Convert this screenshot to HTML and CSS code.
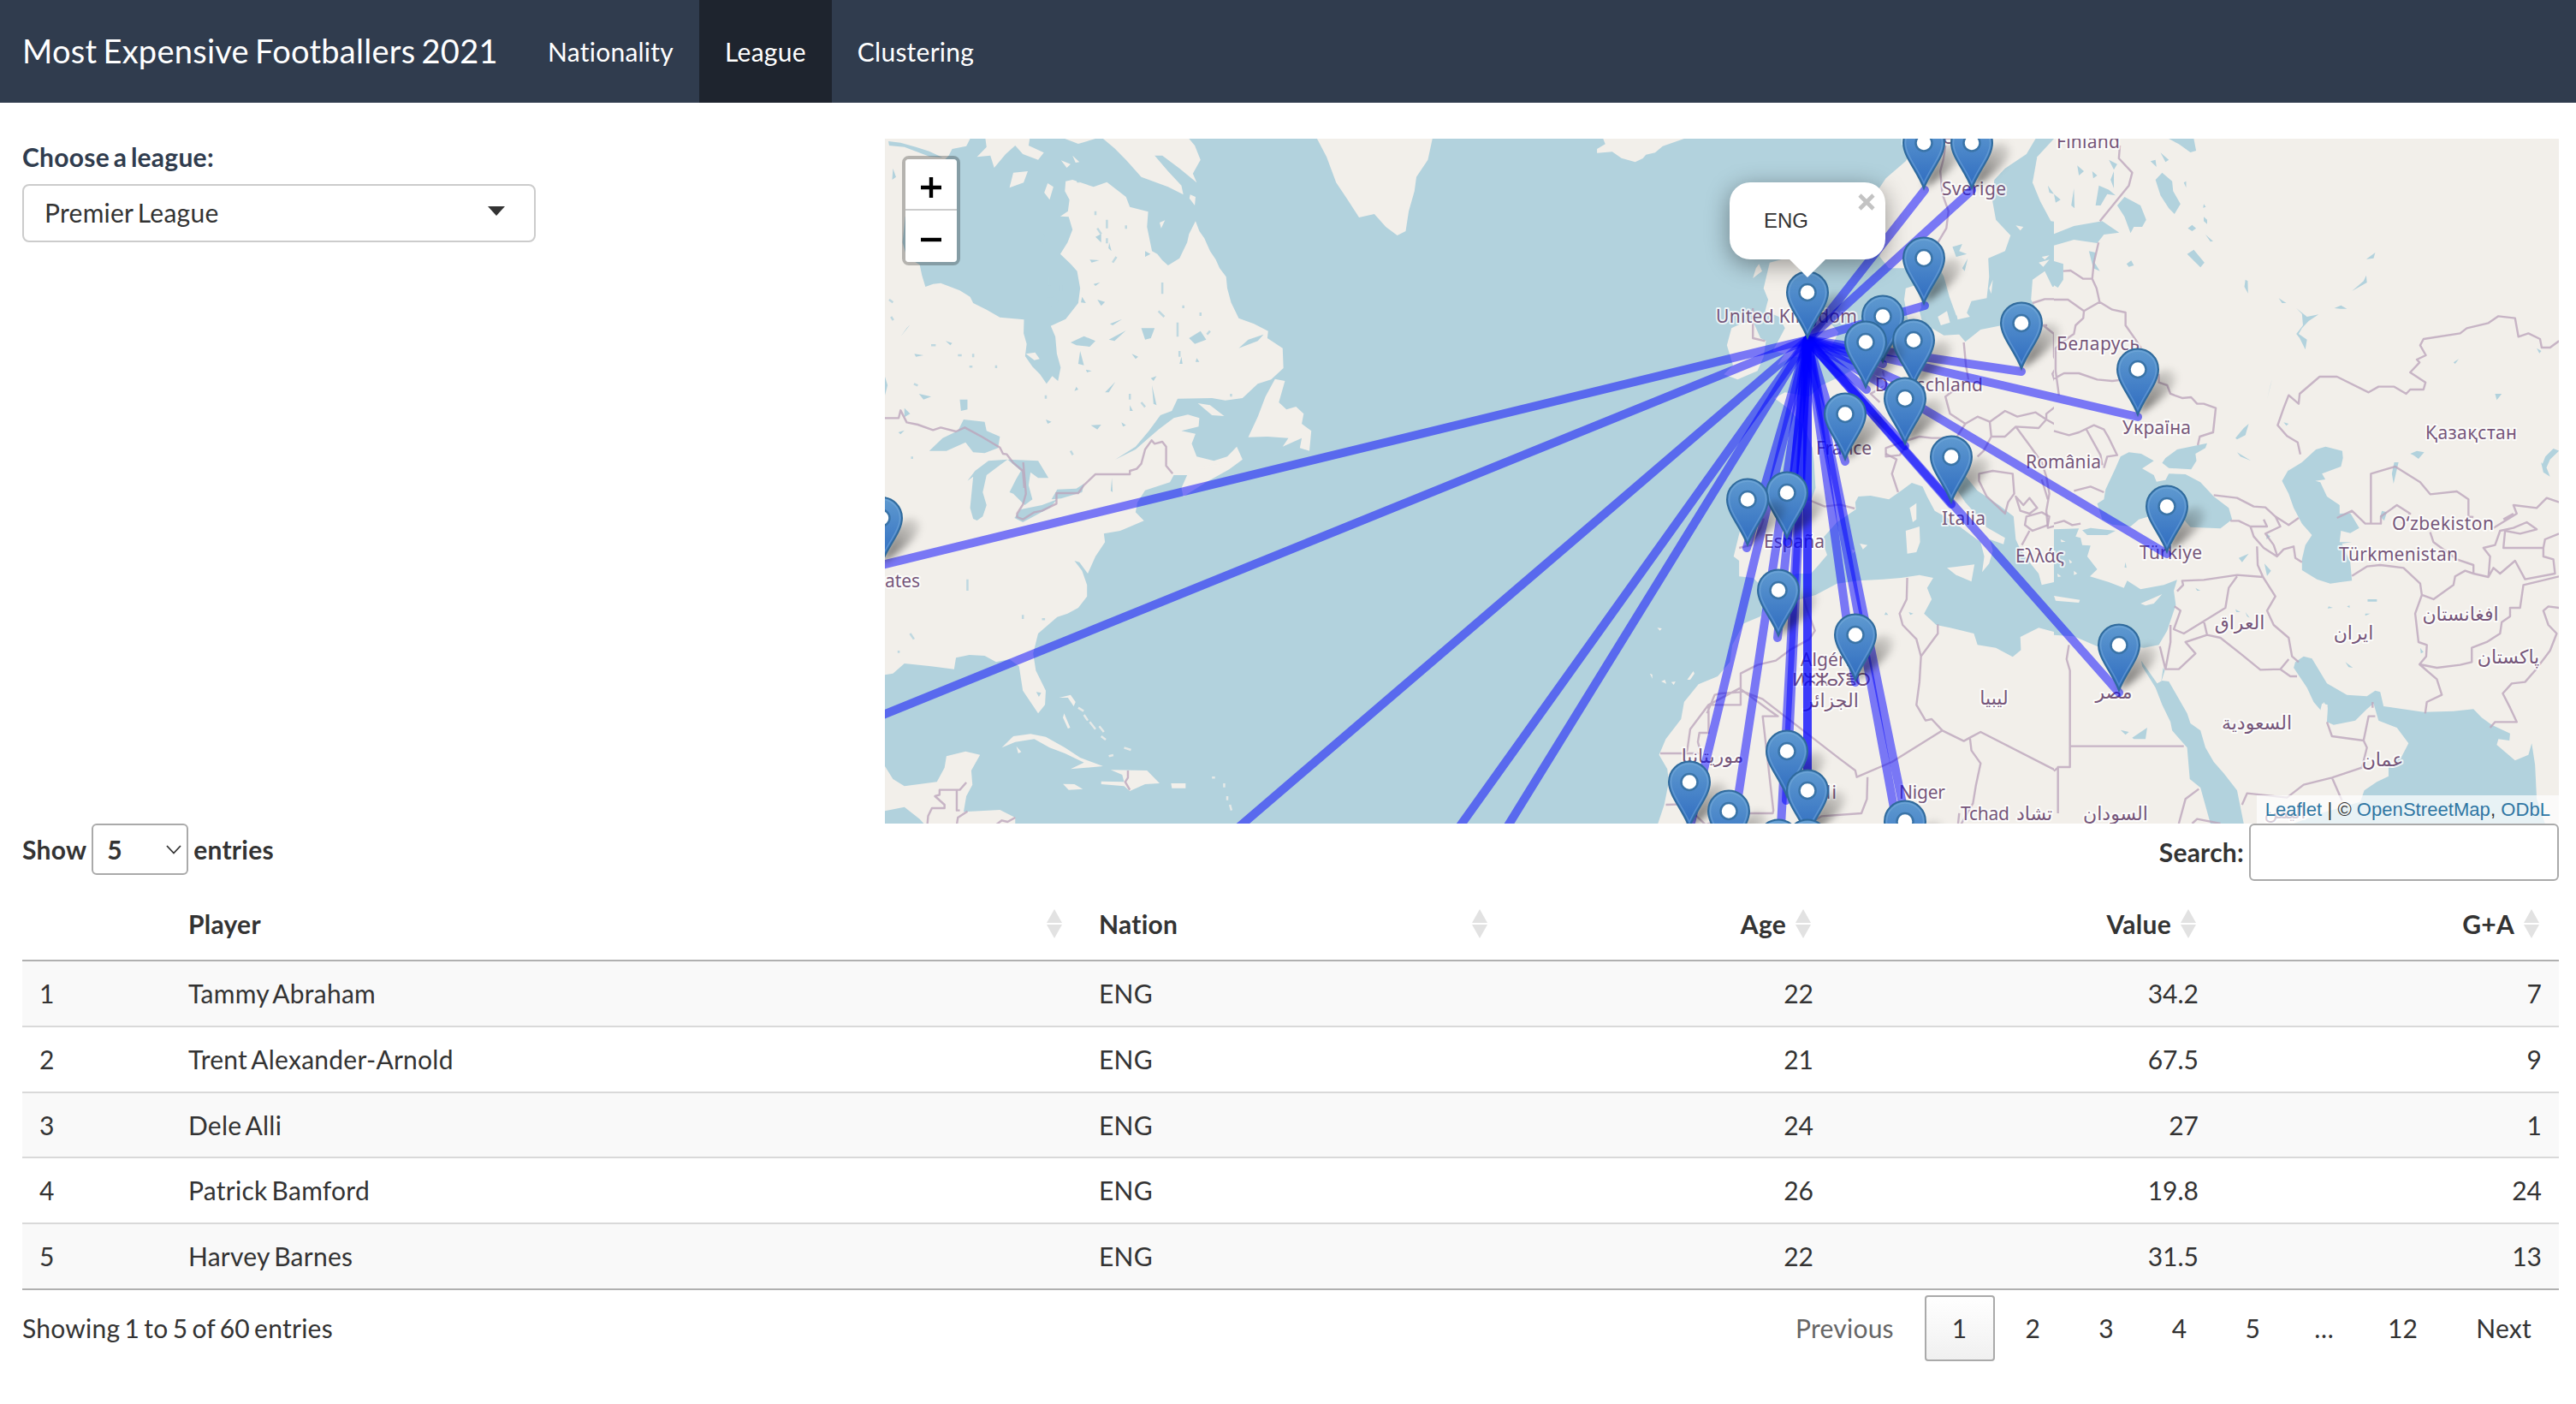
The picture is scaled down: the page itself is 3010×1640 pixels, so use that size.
FILE: index.html
```html
<!DOCTYPE html>
<html lang="en">
<head>
<meta charset="utf-8">
<title>Most Expensive Footballers 2021</title>
<link rel="stylesheet" href="styles.css">
</head>
<body>
<nav class="navbar">
  <span class="brand">Most Expensive Footballers 2021</span>
  <a class="tab">Nationality</a>
  <a class="tab active">League</a>
  <a class="tab">Clustering</a>
</nav>
<main class="page">
  <section class="top">
    <div class="sidebar">
      <label class="label">Choose a league:</label>
      <div class="select"><span>Premier League</span>
        <svg class="caret" width="20" height="11" viewBox="0 0 20 11"><path d="M0 0H20L10 11Z" fill="#333"/></svg>
      </div>
    </div>
    <div class="map">
      <svg class="canvas" width="1956" height="800" viewBox="1034 162 1956 800">
        <defs>
          <linearGradient id="pinFill" x1="0" y1="0" x2="0" y2="1"><stop offset="0" stop-color="#5f9ad0"/><stop offset="1" stop-color="#2e6bc0"/></linearGradient>
          <linearGradient id="shade" x1="0" y1="1" x2="1" y2="0"><stop offset="0" stop-color="#000" stop-opacity=".6"/><stop offset="1" stop-color="#000" stop-opacity=".05"/></linearGradient>
          <filter id="blur" x="-50%" y="-50%" width="200%" height="200%"><feGaussianBlur stdDeviation="4"/></filter>
          <g id="pin">
            <path d="M0 53C6 36 18 -2 36 0C54 4 46 26 0 53Z" fill="url(#shade)" filter="url(#blur)"/>
            <path d="M0 53C-8 32 -24 16 -24 0A24 24 0 0 1 24 0C24 16 8 32 0 53Z" fill="url(#pinFill)" stroke="#2f6a9c" stroke-width="2"/>
            <path d="M0 47C-7 30 -21.500 14 -21.500 0A21.500 21.500 0 0 1 21.500 0C21.500 14 7 30 0 47Z" fill="none" stroke="#7fb2de" stroke-opacity=".45" stroke-width="1.500"/>
            <circle r="9.500" fill="#fff" stroke="#3a74a8" stroke-width="2.500"/>
          </g>
        </defs>

        <!-- North America and Greenland -->
        <g transform="translate(1030 150) scale(.44643 .33333)">
          <g class="land">
            <path d="M9 36L232 36L222 62L185 72L176 95L100 200L62 310L55 400L66 450L100 478L106 515L115 555L135 545L155 542L205 568L232 590L240 612L275 635L310 662L373 670L372 718L380 755L376 798L395 835L415 862L432 895L447 868L462 885L469 838L459 790L455 730L443 692L482 668L515 612L520 560L512 500L495 475L468 440L487 400L500 355L490 310L468 308L488 290L492 250L480 220L482 185L500 180L555 205L590 188L640 240L650 275L698 292L695 345L708 430L722 440L735 462L750 480L780 455L800 400L805 370L822 325L832 360L845 385L860 430L875 460L885 490L902 520L905 560L915 610L935 665L975 685L1012 710L1010 735L1050 770L1052 840L1020 880L985 895L945 945L900 953L865 945L775 947L760 990L730 1005L700 1060L665 1115L612 1160L665 1125L725 1055L765 1015L802 1003L832 1015L830 1045L785 1060L822 1070L812 1105L825 1150L870 1165L905 1150L930 1115L945 1160L910 1195L850 1240L790 1290L785 1260L800 1215L765 1215L755 1240L690 1268L670 1310L665 1345L687 1375L625 1410L582 1420L585 1450L560 1500L540 1560L518 1520L505 1515L525 1550L538 1600L538 1640L515 1680L487 1700L460 1712L410 1770L397 1840L404 1900L430 1970L428 2020L410 2050L370 1970L360 1885L335 1860L300 1870L270 1848L230 1845L195 1855L190 1895L130 1885L60 1875L30 1910L9 1915Z"/>
            <path d="M9 2235L30 2280L60 2305L145 2290L165 2240L170 2200L220 2183L258 2195L235 2250L238 2300L222 2340L215 2395L310 2388L350 2415L350 2450L120 2450L100 2420L60 2378L9 2392Z"/>
            <path d="M580 36L610 70L640 110L680 170L750 205L790 232L785 200L750 150L715 95L735 95L780 140L825 190L815 158L835 110L820 60L805 36Z"/>
            <path d="M272 36L275 65L250 100L285 95L295 138L325 90L350 60L370 90L410 110L425 85L385 60L388 36Z"/>
            <path d="M480 36H560L515 54ZM345 155L383 150L372 190L335 208ZM435 192L450 205L440 250L426 225ZM470 112L495 125L485 138ZM500 95L518 118L508 120ZM728 330L742 322L732 350ZM378 790L402 785L414 808L400 812ZM808 232L822 240L820 270L806 245Z"/>
            <path d="M1140 36L1165 100L1190 190L1220 250L1250 312L1290 300L1320 345L1350 375L1372 360L1380 290L1395 220L1400 170L1430 110L1442 36Z"/>
            <path d="M1030 878L1056 885L1040 960L1060 985L1085 975L1105 1000L1100 1035L1125 1060L1120 1130L1095 1120L1100 1085L1050 1115L1065 1085L1010 1080L960 1082L985 1010L1005 940Z"/>
            <path d="M828 963L860 970L897 1008L865 1005Z"/>
            <path d="M315 2170L345 2130L390 2122L430 2132L480 2170L520 2205L580 2235L495 2245L530 2222L480 2190L440 2170L400 2140L350 2150Z"/>
            <path d="M600 2248L695 2250L728 2295L690 2298L650 2322L635 2305L575 2298L575 2288L635 2290L630 2265ZM475 2297L505 2298L527 2315L490 2318ZM758 2295H796V2312H760ZM478 2050L494 2100L488 2103L475 2065ZM353 2165L366 2185L358 2190ZM465 1995L495 1985L508 2010L503 2025L488 1995Z"/>
          </g>
          <g class="water">
            <path d="M125 1130L160 1085L200 1060L215 1020L270 1028L275 1060L310 1080L305 1120L270 1138L240 1135L220 1100L170 1130Z"/>
            <path d="M240 1368L232 1330L240 1220L225 1235L245 1200L280 1165L330 1160L310 1180L275 1215L265 1275L275 1320L265 1360L250 1374Z"/>
            <path d="M330 1160L410 1165L437 1225L410 1225L390 1205L385 1250L395 1300L375 1320L345 1280L335 1275L352 1230L365 1200Z"/>
            <path d="M348 1365L365 1335L420 1320L460 1300L440 1330L370 1380ZM445 1300L460 1265L510 1262L530 1245L525 1275L470 1297Z"/>
            <path d="M18 45L50 50L90 65L125 80L160 102L125 98L60 65L20 60ZM205 950L225 950L225 985L208 990ZM9 870L16 900L9 935ZM495 750L530 728L560 745L545 765L510 760ZM680 700L715 700L705 735L690 740ZM805 735L835 710L850 740L820 755ZM935 770L960 740L1000 722L985 745ZM585 925L612 888L595 925ZM595 740L640 708L610 745ZM565 600L585 608L575 622ZM520 780L530 830L515 825ZM75 688L50 730L66 700ZM98 930L130 940L110 950ZM510 180L520 190L512 190ZM430 595L450 590L465 605L445 625ZM598 685L630 668L605 690ZM560 380L575 370V400ZM705 875L720 868L712 885ZM708 900L720 970L712 965ZM650 970L658 990L650 990ZM548 1040L575 1038L565 1055ZM430 1020L445 1028L435 1035ZM628 1030L640 1040L632 1045ZM168 745L185 752L180 760ZM545 460L570 462L550 470ZM555 545L572 540L560 552ZM655 790L672 800L665 808ZM785 800L788 825H780ZM825 805L832 818H822ZM60 980L75 1000L60 1012ZM44 1065L60 1058L50 1072ZM30 140L38 170L28 180ZM510 905L515 915L505 920ZM86 790L110 795L90 800ZM690 430L704 440L690 450ZM525 590L535 612L522 610ZM596 400L602 430L594 420ZM405 1975L418 1978L412 1992ZM603 1225L605 1275L600 1270ZM535 845L550 850L538 855Z"/>
          </g>
          <g class="speck"><path d="M560 290v14M590 320v30M565 350l10 20M590 385v18M640 340v12M615 450l-10 20M735 540v40M775 680v50M780 780v20M725 640l15 20M790 620v10M835 645v12M860 710l-8 12M200 795h10M240 790v12M300 830v10M85 895l10 6M130 760h12M20 600l10 10M25 660l6 12M650 930v20M680 960l10 16M230 835h8M430 935v12M80 1150v8M495 1130l6 14M225 1580v40M370 1705v14M420 1720h8M75 1770l10 20M45 1830v8M440 520v30M470 550v20M425 370l-8 40M915 930v10"/>
          <path class="isles" d="M515 2030l14 12M530 2055l10 20M545 2080l15 25M570 2095l12 20M575 2130l12 12M635 2170l18 8M595 2200l12-4M865 2275h8M897 2295v14M905 2340v14M912 2370l4 20M830 1190l60-10"/></g>
          <path class="border" d="M9 1015H45L50 988L66 1030L95 1038L135 1057L155 1048L195 1062L218 1048L262 1080L310 1118L318 1140L328 1142L345 1172L370 1200L374 1260M371 1170L378 1280L370 1318L355 1350V1362L370 1370L400 1345L420 1340L458 1315V1278H515L530 1250L560 1212H650V1200L668 1193L680 1175L690 1125L707 1093L715 1105L735 1098L745 1115V1182L762 1210"/>
          <path class="border" d="M120 2440L122 2410L132 2382H165V2370L140 2340L152 2335L152 2318H205L222 2292M197 2318V2390H205M197 2440L200 2415L225 2393M300 2440L315 2425L330 2430L350 2415M645 2250L645 2275L638 2290L650 2318"/>
        </g>

        <!-- Europe and Africa -->
        <g transform="translate(1900 150) scale(.35714 .33333)">
          <g class="land">
            <path d="M-75 36L-68 55L-95 72L-95 86L-45 82L-15 104L30 118L55 105L65 92L95 85L120 62L190 36Z"/>
            <path d="M345 700L375 685L415 675L440 735L458 745L450 800L430 850L365 880L320 862L350 830L330 760Z"/>
            <path d="M470 470L540 450L560 480L600 560L640 630L668 680L695 715L670 770L640 785L600 800L540 800L495 830L520 790L480 780L500 740L520 700L500 660L455 640L465 600L450 560ZM435 475L445 500L415 525L425 490Z"/>
            <path d="M1340 36L1310 90L1240 140L1205 180L1198 250L1210 320L1258 375L1240 430L1185 455L1188 520L1180 595L1130 605L1110 660L1080 655L1058 590L1040 520L1000 440L960 430L910 490L860 490L830 450L835 300L828 210L850 175L915 115L960 36Z"/>
            <path d="M915 560L950 548L1000 560L960 640L972 690L1000 700L1040 725L1090 722L1110 748L1160 705L1230 690L1330 668L1345 640L1325 600L1330 530L1370 500L1395 555L1430 550L1432 490L1450 470L1410 440L1405 405L1480 390L1568 380L1568 1600L1400 1590L1360 1600L1350 1560L1320 1520L1290 1475L1275 1440L1268 1360L1220 1320L1150 1270L1108 1215L1085 1190L1060 1215L1085 1270L1110 1310L1160 1370L1180 1398L1240 1435L1235 1457L1190 1440L1200 1480L1188 1525L1165 1555L1172 1500L1160 1450L1110 1410L1060 1370L1010 1340L985 1290L970 1255L935 1242L900 1270L860 1300L800 1287L760 1290L750 1310L752 1335L690 1380L640 1440L658 1495L630 1530L605 1560L560 1560L500 1580L470 1610L440 1600L415 1575L370 1570L370 1515L352 1500L375 1400L362 1320L385 1290L540 1300L605 1305L620 1260L615 1170L610 1120L580 1040L530 980L485 945L520 925L600 940L640 900L700 870L770 830L800 780L820 735L850 720L915 715L925 690L910 600Z"/>
            <path d="M1568 310L1450 335L1390 325L1355 255L1330 190L1345 100L1400 36L1568 36Z"/>
            <path d="M440 1710L385 1735L348 1810L340 1870L300 1920L237 1948L190 2010L180 2070L130 2140L108 2195L135 2245L140 2290L125 2370L100 2450H1568V1810L1500 1805L1420 1770L1350 1750L1290 1782L1292 1828L1265 1852L1210 1820L1150 1810L1138 1770L1060 1750L1015 1740L975 1700L1000 1650L985 1610L1005 1575L960 1565L900 1575L840 1580L760 1585L690 1595L620 1635L570 1650L525 1670L500 1650L470 1640Z"/>
            <path d="M915 1410L960 1395L962 1450L950 1485L920 1490ZM928 1330L950 1313V1370L938 1380ZM1050 1540L1140 1528L1130 1588L1080 1565ZM765 1455L790 1460L775 1475ZM738 1475L750 1480L742 1490ZM1405 1640L1490 1652L1488 1660L1410 1655Z"/>
            <path d="M1080 645L1110 640L1125 660L1085 670ZM1020 660L1050 640L1060 680L1030 690ZM1188 560L1200 530L1195 580ZM1275 340L1300 345L1290 358ZM1350 470L1385 460L1365 485ZM1360 450L1385 445L1370 460Z"/>
            <path d="M78 1910l8 4v14zM115 1938l12-6 5 14zM148 1940l14-2-6 12zM200 1932l20-30 4 8-14 22zM102 1750l15 2-6 8z"/>
          </g>
          <path class="water" d="M1068 415L1100 405L1090 430L1115 440L1080 450ZM1100 490L1118 455L1108 500ZM1400 150L1415 120V200ZM1440 80L1448 130L1438 110ZM1460 130L1480 150L1455 180ZM1500 80L1520 120L1505 140ZM1530 100L1545 160L1530 150ZM1420 220L1445 240L1430 250ZM1380 200L1400 230L1385 225ZM1515 200L1545 210L1530 250ZM970 590L985 600L975 660L965 620ZM925 1695L940 1700L930 1705ZM850 1695L858 1705L845 1705Z"/>
          <g class="border">
            <path d="M1045 60L1038 110L1028 150L1035 230L1055 290L1048 350L1020 400L1015 450M1430 505L1460 498L1500 528H1525L1545 450L1530 400M1525 528L1540 600L1500 630L1430 598H1370L1330 612M1500 630L1502 660L1480 690L1400 720L1365 690L1378 690M1400 720V800L1412 830L1395 860L1415 925L1410 970L1375 1000V1020M1415 875L1450 858L1568 880M1105 750L1112 830L1120 880L1045 940L1060 1000L1110 1035L1150 1010L1190 1028L1240 990L1280 1010L1340 995L1375 1020M1190 1028L1195 1080L1170 1130L1150 1150M1110 1035L1080 1085L1000 1085L960 1080L900 1100L850 1120V1150L895 1145L920 1110M1195 1080L1240 1080L1275 1045L1350 1050L1375 1020L1450 1065L1500 1050L1540 1110L1545 1170M1275 1045L1320 1110L1360 1170L1375 1220L1385 1280L1375 1340L1380 1400L1430 1385L1480 1400L1500 1370L1510 1300"/>
            <path d="M890 1275L870 1210L885 1160L850 1140M830 960L800 930L850 900L840 850M605 1305L650 1325L700 1318L748 1332M1155 1210L1200 1200L1265 1210L1270 1280L1250 1310L1240 1350L1180 1290L1155 1235ZM1275 1290L1300 1320L1320 1295L1345 1330L1320 1350L1290 1340ZM1310 1360L1360 1345L1385 1360L1380 1390L1330 1410L1305 1390ZM1320 1410L1295 1460M1380 1300L1360 1230M1420 1260L1480 1250L1568 1260M415 630V735L455 745M370 1470L410 1460L440 1400L450 1370L370 1370"/>
            <path d="M920 1575L918 1650L895 1700L905 1740L950 1790L965 1850L1020 1770V1738M965 1850L960 1940L950 2020L980 2075L1000 2070L1035 2110L1105 2147L1125 2135L1160 2115L1410 2252V2238H1450V1980L1440 1860L1445 1810M1450 2165H1568M1410 2252V2400M1125 2135L1130 2180L1160 2225L1145 2300L1135 2365L1090 2450M1035 2110L870 2220L755 2273L750 2250L700 2210L447 2000L375 1970V1910L430 1880L490 1865L540 1825L600 1790L618 1760L590 1680L580 1640M375 1960L270 2020H375V1960M375 1965L470 2040L497 2060H447L482 2390L480 2400H370L260 2440M270 2020V2118H240L235 2150L245 2190L112 2190M270 2020L210 2105L200 2180L185 2195M375 1975L310 1980L290 1985L265 2050M130 2370L190 2368L260 2440M790 2273L788 2350L770 2400L640 2410L580 2450M1085 2450L1090 2400"/>
          </g>
        </g>

        <!-- Asia -->
        <g transform="translate(2400 150) scale(.38903 .33333)">
          <path class="land" d="M0 36H1517V2436H0Z"/>
          <g class="water">
            <path d="M0 370L60 342L145 325L196 365L150 372L130 402L60 390L0 410ZM0 465L28 475L28 530L12 558L0 550ZM105 430L125 435L122 470L138 500L118 490ZM190 270L212 240L260 270L277 320L265 345L240 345L230 367L212 310ZM305 180L325 155L355 185L358 220L380 265L362 300L345 280L320 235ZM345 36H420L427 78L410 84L375 55ZM400 440L420 425L452 470L440 487ZM402 350L415 338L427 350L415 360ZM218 475L232 463L240 480L225 485ZM320 85L345 110L335 118ZM290 115L305 110L308 135ZM390 190L397 185V208ZM450 265L456 275L448 278ZM450 310L460 320V335L450 325ZM455 372L478 395L470 397ZM165 110L190 125L180 145ZM135 200L165 215L185 235L160 230L140 270L125 270ZM180 150V210L170 180ZM60 210L62 280L52 270ZM70 130L90 150L75 165ZM115 150L130 165L118 175ZM0 230L20 250L5 260ZM575 530L582 535L583 578L572 555ZM675 595L698 612L685 612ZM728 630L760 660L795 652L765 675L745 700L735 720L760 740L755 775L738 735L728 720L748 690L745 650ZM720 840L735 800L722 835ZM842 630L862 620L880 632L860 632ZM938 458L965 435L960 455ZM895 570L930 535L938 515L940 540ZM545 1085L570 1050L585 1035L575 1075L550 1090ZM550 1135L592 1165L560 1150ZM655 880L640 950L650 900ZM690 1030L705 1035L698 1042ZM1070 1140L1090 1130L1112 1135L1095 1158L1080 1145ZM1325 930L1345 930L1330 952ZM1200 820L1216 808L1205 825ZM1450 770L1464 780L1458 788Z"/>
            <path d="M185 1190L155 1265L150 1300L130 1315L145 1370L175 1388L230 1395L255 1370L290 1358L340 1358L390 1370L410 1397L500 1402L535 1370L525 1330L480 1290L440 1240L395 1212L345 1210L335 1232L308 1238L300 1215L265 1192L300 1165L262 1140L225 1135L200 1150Z"/>
            <path d="M325 1172L335 1155L370 1125L460 1103L455 1120L425 1140L428 1165L412 1195L345 1190ZM85 1408L110 1400L185 1410L160 1425L100 1425Z"/>
            <path d="M703 1200L745 1170L787 1125L816 1115L866 1130L868 1155L862 1185L805 1210L815 1230L785 1235L800 1240L820 1290L858 1320L858 1350L890 1348L917 1400L890 1418L862 1410L858 1450L895 1450L865 1455L890 1520L895 1585L860 1590L830 1595L790 1580L745 1548L745 1510L755 1460L775 1425L745 1385L720 1330L705 1280L685 1235L710 1185Z"/>
            <path d="M0 1405L75 1402L65 1430L80 1435L85 1460L110 1462L100 1500L130 1545L108 1570L165 1590L210 1610L220 1585L260 1615L330 1600L370 1582L360 1620L366 1670L340 1760L315 1810L270 1820L200 1810L130 1815L60 1780L0 1775Z"/>
            <path d="M725 1870L750 1850L775 1858L820 1945L880 1985L940 1990L965 1970L980 1975L990 2025L1110 2045L1200 2042L1260 2035L1285 2065L1315 2090L1370 2120L1368 2145L1335 2140L1330 2160L1385 2215L1425 2195L1435 2155L1445 2230L1450 2350L1475 2436H720L800 2400L920 2360L932 2320L970 2290L1005 2270L1005 2240L1045 2200L1065 2155L1030 2100L975 2075L960 2015L940 2035L905 2075L840 2090L820 2080L822 2030L810 2010L802 2040L780 2010L760 1960L720 1890Z"/>
            <path d="M262 1865L310 1945L325 1935L345 1938L400 2050L410 2085L440 2110L455 2170L480 2220L510 2260L550 2320L570 2436H470L440 2310L408 2280L400 2170L355 2110L350 2080L325 2020L305 1960L265 1885ZM328 1890L322 1940L333 1900Z"/>
            <path d="M1466 1180L1476 1150L1500 1122L1517 1130L1490 1160L1475 1200ZM1463 1170L1480 1190L1490 1220L1470 1205ZM1022 1170H1035L1020 1245L1015 1210ZM985 1340L1000 1345L992 1375L980 1360ZM555 1505L585 1490L565 1520ZM632 1525L652 1550L640 1568ZM545 1685L560 1695L548 1695ZM575 1695L588 1715L580 1710ZM825 1675L838 1680L822 1682ZM942 1650H970V1658H942ZM935 1700L950 1700L935 1708ZM880 1675L888 1672V1680ZM875 1870L898 1890L885 1888ZM200 2108L225 2115L215 2125ZM235 2135L280 2100L275 2140L240 2140ZM640 1420L650 1430L638 1440ZM215 1520L218 1540L212 1538ZM425 1610L440 1620L430 1620ZM1100 1820L1110 1835L1102 1840Z"/>
          </g>
          <g class="land"><path d="M0 1638L78 1652L75 1662L5 1655ZM260 1665L290 1650L325 1632L300 1665L275 1672ZM45 1510L55 1520L48 1525ZM10 1560L22 1570L12 1572ZM60 1550L70 1560L60 1565ZM20 1440L35 1448L22 1450ZM805 2015L822 2020L820 2065L808 2070L800 2040Z"/></g>
          <g class="border">
            <path d="M198 60L195 105L235 155L225 200L180 265L138 325M134 400L120 470L115 527L128 560L137 608L90 640L88 665L65 690L60 720L35 740L5 770V850L15 935M137 608L175 635L215 645V690L245 740L262 770M0 600H42L90 640M28 500L50 498L88 527H115M0 877L30 858H75L130 880L175 885L210 880M315 860V890L340 900L350 930L385 945L412 942L430 965L450 965L486 980L478 1065L438 1080L432 1110M0 1060L45 1075L75 1065L120 1040L150 1055L165 1085L190 1145L160 1150L150 1190M95 1050L140 1145L145 1180M540 1170M740 1142L732 1100L700 1078L672 1040L690 980L705 935L735 965L738 930L798 870H850L945 925L975 905H1022L1058 930L1070 915H1110L1116 890L1070 855L1098 820L1090 810L1117 795L1100 760L1110 738L1220 718L1240 700L1305 682L1335 658L1385 665L1395 730L1425 718L1460 738L1465 768H1490L1517 745"/>
            <path d="M0 1385L30 1375L55 1390L80 1385M60 1270L110 1255L150 1275M480 1285L550 1295L600 1325L635 1328L665 1360L705 1390L735 1365M530 1375H555L590 1395L600 1430L630 1470L670 1500L690 1475L720 1465L725 1505L745 1520M590 1395H640L630 1370M665 1360L680 1395L635 1420L660 1460L670 1495M610 1465L612 1530L628 1572L550 1565L450 1582L385 1585L388 1600L370 1622M628 1572L665 1640L640 1690L660 1740L705 1785L715 1850L735 1870M550 1570L525 1610L515 1680L390 1770L360 1755L380 1690L362 1675M450 1725L460 1775L395 1800L425 1840L375 1895H335L318 1815M335 1895L350 1800V1740M460 1775L500 1785L560 1840L620 1897L680 1895L710 1920H730M680 1895L705 1860M45 1810L38 1860L48 1900V2165H390M48 2165V2238H12V2400M375 2436L395 2350L435 2315M0 2252L12 2240"/>
            <path d="M850 1365L895 1340L935 1385H982V1360L1030 1320L1070 1350L1045 1385M952 1385V1210L1025 1185L1100 1240L1130 1282L1210 1272L1245 1300V1360L1260 1362M1130 1415L1140 1450L1210 1510L1260 1530V1560L1235 1550L1205 1570L1200 1600L1140 1650L1105 1635L1100 1595L1050 1540L980 1530L940 1535L895 1568M1105 1635L1085 1700L1095 1800L1120 1810L1118 1850L1098 1878L1150 1890L1220 1880L1255 1870V1820L1300 1800L1340 1770L1345 1730L1370 1710V1680L1400 1680L1410 1600L1517 1570M1098 1878L1150 1930L1165 1985L1120 2010L1115 2050M1260 1560L1305 1572L1320 1540L1340 1560L1385 1515L1415 1580L1505 1560L1500 1510L1470 1500V1470L1350 1470L1355 1410L1400 1420L1450 1405L1420 1380L1380 1400L1340 1410L1325 1460L1290 1470L1310 1500L1305 1572M1320 1400L1390 1350L1380 1320L1450 1330L1480 1295L1517 1310M1380 1350L1350 1370M1470 1470L1475 1440L1517 1420M1517 1680L1485 1675L1470 1690L1485 1740L1510 1770L1490 1830L1445 1900L1415 1940L1375 1945L1348 1980L1370 2030L1390 2080H1325L1310 2100M820 2080L835 2130L930 2145L945 2060H965M930 2145L940 2170L925 2240L835 2275L750 2300L700 2345L580 2330L565 2370M835 2275L865 2355M957 2010V2030M415 2436L430 2420L500 2436"/>
          </g>
        </g>

        <g class="place">
          <text x="1034" y="686" textLength="41">ates</text>
          <text x="2005" y="377" textLength="165">United Kingdom</text>
          <text x="2222" y="168" textLength="60">Norge</text>
          <text x="2269" y="228" textLength="75">Sverige</text>
          <text x="2403" y="173" textLength="74">Finland</text>
          <text x="2403" y="409" textLength="97">Беларусь</text>
          <text x="2191" y="457" textLength="126">Deutschland</text>
          <text x="2122" y="531" textLength="65">France</text>
          <text x="2367" y="547" textLength="88">România</text>
          <text x="2480" y="507" textLength="80">Україна</text>
          <text x="2834" y="513" textLength="107">Қазақстан</text>
          <text x="2795" y="619" textLength="119">O‘zbekiston</text>
          <text x="2733" y="655" textLength="139">Türkmenistan</text>
          <text x="2500" y="653" textLength="73">Türkiye</text>
          <text x="2355" y="657" textLength="57">Ελλάς</text>
          <text x="2269" y="613" textLength="51">Italia</text>
          <text x="2061" y="640" textLength="71">España</text>
          <text x="2104" y="778" textLength="70">Algérie</text>
          <text x="2094" y="801" textLength="92">ⵍⵣⵣⴰⵢⴻⵔ</text>
          <text x="2100" y="933" textLength="46">Mali</text>
          <text x="2219" y="933" textLength="54">Niger</text>
          <text x="2291" y="958" textLength="57">Tchad</text>
        </g>
        <g class="place arabic">
          <text x="2377" y="958">تشاد</text>
          <text x="2140" y="826">الجزائر</text>
          <text x="2330" y="823">ليبيا</text>
          <text x="2001" y="891">موريتانيا</text>
          <text x="2472" y="958">السودان</text>
          <text x="2470" y="816">مصر</text>
          <text x="2617" y="735">العراق</text>
          <text x="2750" y="747">ایران</text>
          <text x="2875" y="725">افغانستان</text>
          <text x="2931" y="775">پاکستان</text>
          <text x="2637" y="852">السعودية</text>
          <text x="2784" y="895">عمان</text>
          <text x="2670" y="956">اليمن</text>
        </g>

        <g class="routes">
          <path d="M2112 397L2249 222"/><path d="M2112 397L2304 222"/><path d="M2112 397L2249 357"/>
          <path d="M2112 397L2200 425"/><path d="M2112 397L2181 455"/><path d="M2112 397L2236 453"/>
          <path d="M2112 397L2362 434"/><path d="M2112 397L2226 521"/><path d="M2112 397L2156 539"/>
          <path d="M2112 397L2280 589"/><path d="M2112 397L2498 487"/><path d="M2112 397L2532 647"/>
          <path d="M2112 397L2476 809"/><path d="M2112 397L2041 640"/><path d="M2112 397L2088 633"/>
          <path d="M2112 397L2077 745"/><path d="M2112 397L2168 797"/><path d="M2112 397L2087 935"/>
          <path d="M2112 397L2112 979"/><path d="M2112 397L2112 1038"/><path d="M2112 397L1974 969"/>
          <path d="M2112 397L2020 1003"/><path d="M2112 397L2226 1014"/><path d="M2112 397L2077 1038"/>
          <path d="M2112 397L2253 1085"/><path d="M2112 397L1030 660"/><path d="M2112 397L980 856"/>
          <path d="M2112 397L1387 1018"/><path d="M2112 397L1668 1018"/><path d="M2112 397L1729 1018"/>
        </g>

        <g class="pins">
          <use href="#pin" x="2248" y="167"/><use href="#pin" x="2304" y="167"/><use href="#pin" x="2248" y="301.500"/>
          <use href="#pin" x="2112" y="341.500"/><use href="#pin" x="2200" y="369.500"/><use href="#pin" x="2362" y="377.500"/>
          <use href="#pin" x="2236" y="397.500"/><use href="#pin" x="2180" y="399.500"/><use href="#pin" x="2498" y="431.500"/>
          <use href="#pin" x="2226" y="465.500"/><use href="#pin" x="2156" y="483.500"/><use href="#pin" x="2280" y="533.500"/>
          <use href="#pin" x="2088" y="575.500"/><use href="#pin" x="2042" y="583.500"/><use href="#pin" x="2532" y="591.500"/>
          <use href="#pin" x="1030" y="605"/><use href="#pin" x="2078" y="689.500"/><use href="#pin" x="2168" y="741.500"/>
          <use href="#pin" x="2476" y="753.500"/><use href="#pin" x="2088" y="877.500"/><use href="#pin" x="1974" y="913.500"/>
          <use href="#pin" x="2112" y="923.500"/><use href="#pin" x="2020" y="947.500"/><use href="#pin" x="2226" y="959.500"/>
          <use href="#pin" x="2078" y="981.500"/><use href="#pin" x="2112" y="981.500"/>
        </g>
      </svg>
      <div class="zoom"><span class="zoom-btn"><svg width="24" height="24" viewBox="0 0 24 24"><path d="M0 12H24M12 0V24" stroke="#000" stroke-width="4.400"/></svg></span><span class="zoom-btn"><svg width="24" height="24" viewBox="0 0 24 24"><path d="M0 12H24" stroke="#000" stroke-width="4.400"/></svg></span></div>
      <div class="popup">ENG
        <svg class="close" width="20" height="20" viewBox="0 0 20 20"><path d="M2 2L18 18M18 2L2 18" stroke="#c3c3c3" stroke-width="4.600"/></svg>
        <svg class="tip" width="44" height="22" viewBox="0 0 44 22"><path d="M0 0H44L22 22Z" fill="#fff"/></svg>
      </div>
      <div class="attribution"><a>Leaflet</a> | © <a>OpenStreetMap</a>, <a>ODbL</a></div>
    </div>
  </section>

  <div class="controls">
    <label class="length">Show <span class="count">5<svg width="18" height="11" viewBox="0 0 18 11"><path d="M1 1L9 9.500L17 1" fill="none" stroke="#333" stroke-width="1.800"/></svg></span> entries</label>
    <label class="search">Search: <input type="text"></label>
  </div>

  <table class="grid">
    <colgroup><col class="c0"><col class="c1"><col class="c2"><col class="c3"><col class="c4"><col class="c5"></colgroup>
    <thead><tr>
      <th></th>
      <th><div class="head wide">Player<svg class="sort" width="18" height="34" viewBox="0 0 18 34"><path d="M9 0L18 16H0ZM0 18H18L9 34Z"/></svg></div></th>
      <th><div class="head wide">Nation<svg class="sort" width="18" height="34" viewBox="0 0 18 34"><path d="M9 0L18 16H0ZM0 18H18L9 34Z"/></svg></div></th>
      <th><div class="head">Age<svg class="sort" width="18" height="34" viewBox="0 0 18 34"><path d="M9 0L18 16H0ZM0 18H18L9 34Z"/></svg></div></th>
      <th><div class="head">Value<svg class="sort" width="18" height="34" viewBox="0 0 18 34"><path d="M9 0L18 16H0ZM0 18H18L9 34Z"/></svg></div></th>
      <th><div class="head">G+A<svg class="sort" width="18" height="34" viewBox="0 0 18 34"><path d="M9 0L18 16H0ZM0 18H18L9 34Z"/></svg></div></th>
    </tr></thead>
    <tbody>
      <tr><td>1</td><td>Tammy Abraham</td><td>ENG</td><td class="num">22</td><td class="num">34.2</td><td class="num">7</td></tr>
      <tr><td>2</td><td>Trent Alexander-Arnold</td><td>ENG</td><td class="num">21</td><td class="num">67.5</td><td class="num">9</td></tr>
      <tr><td>3</td><td>Dele Alli</td><td>ENG</td><td class="num">24</td><td class="num">27</td><td class="num">1</td></tr>
      <tr><td>4</td><td>Patrick Bamford</td><td>ENG</td><td class="num">26</td><td class="num">19.8</td><td class="num">24</td></tr>
      <tr><td>5</td><td>Harvey Barnes</td><td>ENG</td><td class="num">22</td><td class="num">31.5</td><td class="num">13</td></tr>
    </tbody>
  </table>

  <div class="footer">
    <span>Showing 1 to 5 of 60 entries</span>
    <div class="pager"><a class="muted">Previous</a><a class="current">1</a><a>2</a><a>3</a><a>4</a><a>5</a><span class="dots">…</span><a>12</a><a>Next</a></div>
  </div>
</main>
</body>
</html>
```
FILE: styles.css
```css
* { box-sizing: border-box; }
body {
  margin: 0;
  background: #fff;
  color: #333;
  font: 30px/42.857px Lato, sans-serif;
  letter-spacing: .25px;
  word-spacing: -2.8px;
}
.navbar {
  display: flex;
  height: 120px;
  padding-left: 26px;
  background: #303c4e;
  color: #fff;
  line-height: 121px;
}
.brand { width: 584px; font-size: 38px; line-height: 118px; white-space: nowrap; }
.tab { padding: 0 30px; }
.tab.active { background: #1e242e; }

.page { padding: 42px 20px 0 26px; }
.top { display: flex; justify-content: space-between; height: 800px; }
.sidebar { width: 600px; }
.label { display: block; margin-bottom: 10px; font-weight: 700; color: #303c4e; }
.select {
  display: flex;
  align-items: center;
  justify-content: space-between;
  height: 68px;
  padding: 0 34px 0 24px;
  border: 2px solid #ccc;
  border-radius: 8px;
}
.caret { margin-top: -4px; }

/* Map */
.map {
  position: relative;
  width: 1956px;
  height: 800px;
  overflow: hidden;
  background: #b2d2dd;
  letter-spacing: 0;
  word-spacing: 0;
}
.canvas { display: block; }
.land { fill: #f2efea; }
.water { fill: #b2d2dd; }
.border, .speck { fill: none; stroke: #bba5bc; stroke-opacity: .8; }
.border path, path.border { vector-effect: non-scaling-stroke; stroke-width: 2.4px; stroke-linejoin: round; }
.speck path { vector-effect: non-scaling-stroke; stroke: #b2d2dd; stroke-width: 2.5px; stroke-opacity: .8; }
.speck .isles { stroke: #f2efea; }
.place {
  fill: #76567a;
  stroke: #fff;
  stroke-opacity: .75;
  stroke-width: 4px;
  stroke-linejoin: round;
  paint-order: stroke;
  font: 21px "Noto Sans", "DejaVu Sans", sans-serif;
}
.arabic { font: 22px "DejaVu Sans", sans-serif; text-anchor: middle; }
.routes path { fill: none; stroke: #00f; stroke-opacity: .5; stroke-width: 10px; stroke-linecap: round; }
.zoom {
  position: absolute;
  left: 20px;
  top: 20px;
  border: 4px solid rgba(0, 0, 0, .25);
  border-radius: 8px;
  background-clip: padding-box;
}
.zoom-btn {
  display: flex;
  align-items: center;
  justify-content: center;
  width: 60px;
  height: 60px;
  padding-top: 8px;
  background: #fff;
}
.zoom-btn:first-child { border-bottom: 2px solid #ccc; border-radius: 4px 4px 0 0; }
.zoom-btn:last-child { border-radius: 0 0 4px 4px; }
.popup {
  position: absolute;
  left: 987px;
  top: 51px;
  width: 182px;
  height: 90px;
  padding-left: 40px;
  border-radius: 24px;
  background: #fff;
  box-shadow: 0 6px 28px rgba(0, 0, 0, .4);
  font: 24px/89px "Liberation Sans", sans-serif;
}
.close { position: absolute; left: 150px; top: 13px; }
.tip { position: absolute; left: 69px; top: 89px; }
.attribution {
  position: absolute;
  right: 0;
  bottom: 0;
  padding: 0 10px;
  background: rgba(255, 255, 255, .7);
  font: 22px/33px "Liberation Sans", sans-serif;
  letter-spacing: .06px;
}
.attribution a { color: #2f76a3; }

/* Table controls */
.controls { display: flex; justify-content: space-between; height: 77px; align-items: flex-start; font-weight: 700; }
.length, .search { display: flex; align-items: center; gap: 6px; }
.count {
  display: flex;
  align-items: center;
  justify-content: space-between;
  width: 113px;
  height: 60px;
  padding: 0 6px 0 16px;
  border: 2px solid #aaa;
  border-radius: 6px;
}
.search input { width: 362px; height: 67px; border: 2px solid #aaa; border-radius: 6px; background: transparent; }

.grid { width: 2964px; table-layout: fixed; border-collapse: separate; border-spacing: 0; border-bottom: 2px solid #b0b0b0; }
.c0 { width: 174px; }
.c1 { width: 1064px; }
.c2 { width: 497px; }
.c3 { width: 378px; }
.c4 { width: 450px; }
.c5 { width: 401px; }
th { padding: 19px 23px 20px 20px; border-bottom: 2px solid #b0b0b0; }
.head { display: flex; align-items: center; justify-content: flex-end; gap: 11px; }
.wide { justify-content: space-between; }
.sort { fill: #e2e2e2; }
td { padding: 16px 20px; border-top: 2px solid #d9d9d9; }
tbody tr:first-child td { border-top: 0; }
tbody tr:nth-child(odd) td { background: #f9f9f9; }
.num { text-align: right; letter-spacing: 0; }

.footer { display: flex; justify-content: space-between; align-items: flex-start; padding-top: 6px; }
.footer > span { padding-top: 17px; }
.pager { display: flex; gap: 4px; }
.pager a { padding: 15px 30px; border: 2px solid transparent; border-radius: 4px; }
.pager .muted { color: #666; }
.pager .current { border-color: #aaa; background: linear-gradient(#fff, #f0f0f0); }
.dots { padding: 17px 30px; margin: 0 -3px 0 -3px; }
```
